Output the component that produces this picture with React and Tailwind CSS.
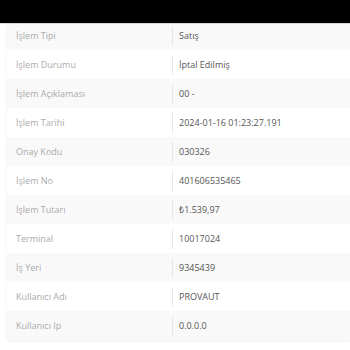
import React from 'react';

const rows = [
    ['İşlem Tipi', 'Satış'],
    ['İşlem Durumu', 'İptal Edilmiş'],
    ['İşlem Açıklaması', '00 -'],
    ['İşlem Tarihi', '2024-01-16 01:23:27.191'],
    ['Onay Kodu', '030326'],
    ['İşlem No', '401606535465'],
    ['İşlem Tutarı', '₺1.539,97'],
    ['Terminal', '10017024'],
    ['İş Yeri', '9345439'],
    ['Kullanıcı Adı', 'PROVAUT'],
    ['Kullanıcı Ip', '0.0.0.0'],
];

const App = () => {
    return (
        <div className="w-[350px] h-[350px] bg-white overflow-hidden" style={{ fontFamily: '"Open Sans", "Noto Sans", sans-serif' }}>
            <div className="h-[23px] bg-black" />
            <div className="h-px bg-[#d9d9d9]" />
            <div className="ml-[7px] shadow-[0_1px_3px_rgba(0,0,0,0.08)]">
                {rows.map(([label, value], i) => (
                    <div
                        key={label}
                        className={`flex items-center text-[9px] ${i === 0 ? 'h-[26px] pb-[3px]' : 'h-[29px]'} ${i % 2 === 0 ? 'bg-[#f9f9f9]' : 'bg-white'}`}
                    >
                        <div className="w-[165px] pl-[9px] text-[#ababab]">{label}</div>
                        <div className="flex items-center h-[20px] pl-[6px] border-l border-[#e6e6e6] text-[#555]">{value}</div>
                    </div>
                ))}
            </div>
        </div>
    );
};

export default App;
